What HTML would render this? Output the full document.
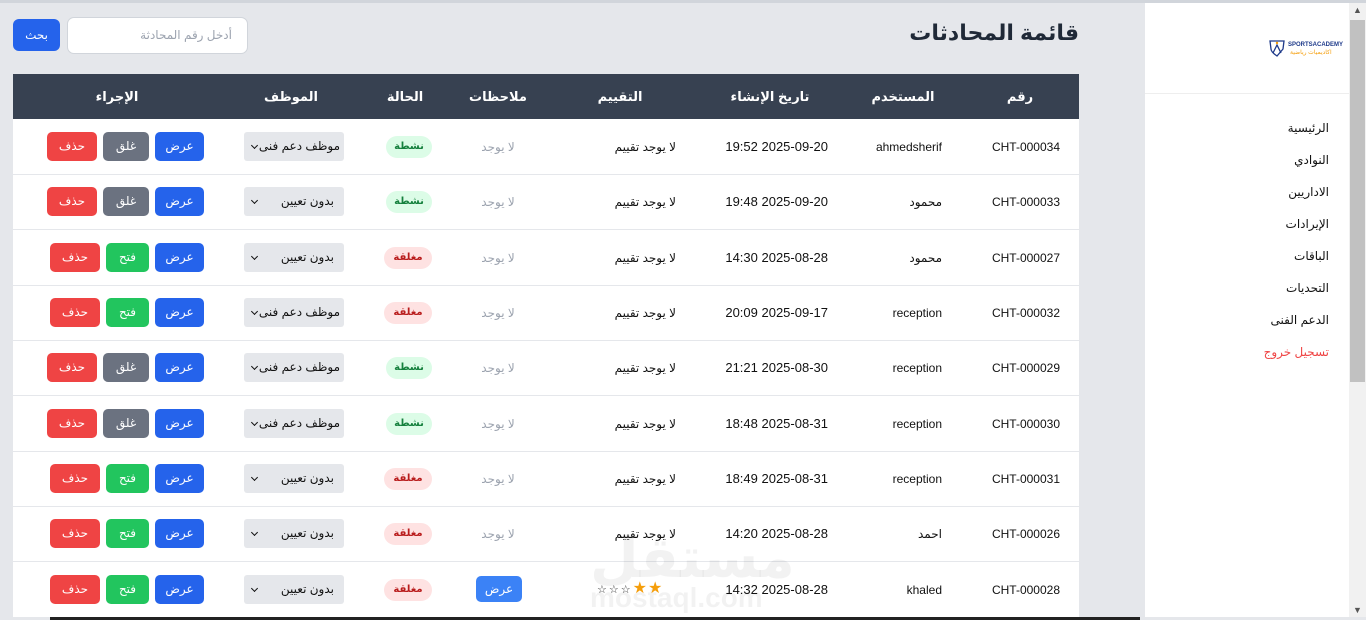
<!DOCTYPE html>
<html><head><meta charset="utf-8"><style>
*{box-sizing:border-box;margin:0;padding:0}
body{width:1366px;height:620px;overflow:hidden;background:#e5e7eb;font-family:"Liberation Sans","DejaVu Sans",sans-serif;position:relative;color:#111}
.a{position:absolute}
.topline{left:0;top:0;width:1366px;height:3px;background:#d1d5db}
.side{left:1145px;top:3px;width:204px;height:614px;background:#fff}
.scroll{left:1349px;top:3px;width:17px;height:614px;background:#f1f1f1}
.thumb{left:1350px;top:20px;width:15px;height:362px;background:#c1c1c1}
.nav{right:37px;font-size:12px;text-align:right;white-space:nowrap}
h1{position:absolute;right:287px;top:20px;font-size:22px;font-weight:bold;color:#1f2937}
.btn{position:absolute;color:#fff;font-size:12px;border-radius:5px;text-align:center;line-height:29px;height:29px}
.thead{left:13px;top:74px;width:1066px;height:45px;background:#374151}
.th{position:absolute;top:74px;line-height:45px;color:#fff;font-weight:bold;font-size:13px;transform:translateX(-50%);white-space:nowrap}
.tbody{left:13px;top:119px;width:1066px;height:498px;background:#fff}
.hr{position:absolute;left:13px;width:1066px;height:1px;background:#e5e7eb}
.c{position:absolute;font-size:12px;line-height:20px;white-space:nowrap}
.num{left:940px;width:120px;text-align:right}
.usr{left:820px;width:122px;text-align:right}
.dt{left:690px;width:138px;text-align:right;direction:ltr;font-size:13px}
.rt{left:540px;width:136px;text-align:right}
.nt{left:448px;width:100px;text-align:center;color:#9ca3af}
.pill{position:absolute;left:386px;width:46px;height:22px;border-radius:11px;font-size:10px;font-weight:bold;text-align:center;line-height:22px}
.on{background:#dcfce7;color:#15803d}
.off{background:#fee2e2;color:#b91c1c;left:384px;width:48px}
.sel{position:absolute;left:244px;width:100px;height:29px;background:#e5e7eb;border-radius:3px;font-size:12px;line-height:29px;text-align:right;padding-right:4px}
.sel:after{content:"";position:absolute;left:8px;top:11px;width:4px;height:4px;border-right:1px solid #111;border-bottom:1px solid #111;transform:rotate(45deg)}
.b1{left:155px;width:49px;background:#2563eb}
.g{left:103px;width:46px;background:#6b7280}
.r1{left:47px;width:50px;background:#ef4444}
.f{left:106px;width:43px;background:#22c55e}
.r2{left:50px;width:50px;background:#ef4444}
</style></head><body>
<div class="a topline"></div>
<div class="a side"></div>
<div class="a" style="left:1145px;top:93px;width:204px;height:1px;background:#eee"></div>
<svg class="a" style="left:1268px;top:39px" width="18" height="18" viewBox="0 0 18 18"><path d="M2 2 L16 2 L15 10 Q9 17 9 17 Q3 13 3 10 Z" fill="none" stroke="#1e3a8a" stroke-width="1.3"/><path d="M5 14 L9 6 L13 14" fill="none" stroke="#1e3a8a" stroke-width="1.3"/><circle cx="9" cy="4" r="1.2" fill="#f59e0b"/></svg>
<div class="a" style="left:1288px;top:42px;font-size:6px;font-weight:bold;color:#1e3a8a">SPORTSACADEMY</div>
<div class="a" style="left:1290px;top:49px;font-size:6px;color:#f59e0b">اكاديميات رياضية</div>
<div class="a nav" style="top:121px">الرئيسية</div>
<div class="a nav" style="top:153px">النوادي</div>
<div class="a nav" style="top:185px">الاداريين</div>
<div class="a nav" style="top:217px">الإيرادات</div>
<div class="a nav" style="top:249px">الباقات</div>
<div class="a nav" style="top:281px">التحديات</div>
<div class="a nav" style="top:313px">الدعم الفنى</div>
<div class="a nav" style="top:345px;color:#ef4444">تسجيل خروج</div>
<div class="a scroll"></div><div class="a thumb"></div>
<div class="a" style="left:1353px;top:5px;font-size:9px;color:#555">▲</div>
<div class="a" style="left:1353px;top:605px;font-size:9px;color:#555">▼</div>
<div class="a" style="left:50px;top:617px;width:1090px;height:3px;background:#222"></div>

<h1>قائمة المحادثات</h1>
<div class="a" style="left:67px;top:17px;width:181px;height:37px;background:#fff;border:1px solid #d1d5db;border-radius:7px;font-size:12px;color:#9ca3af;text-align:right;padding-right:15px;line-height:35px">أدخل رقم المحادثة</div>
<div class="btn" style="left:13px;top:19px;width:47px;height:32px;line-height:32px;background:#2563eb;border-radius:6px">بحث</div>

<div class="a thead"></div>
<div class="th" style="left:1020px">رقم</div>
<div class="th" style="left:903px">المستخدم</div>
<div class="th" style="left:770px">تاريخ الإنشاء</div>
<div class="th" style="left:620px">التقييم</div>
<div class="th" style="left:498px">ملاحظات</div>
<div class="th" style="left:405px">الحالة</div>
<div class="th" style="left:291px">الموظف</div>
<div class="th" style="left:117px">الإجراء</div>
<div class="a tbody"></div>
<div class="hr" style="top:174px"></div><div class="hr" style="top:229px"></div><div class="hr" style="top:285px"></div><div class="hr" style="top:340px"></div><div class="hr" style="top:395px"></div><div class="hr" style="top:451px"></div><div class="hr" style="top:506px"></div><div class="hr" style="top:561px"></div>

<div class="c num" style="top:137px">CHT-000034</div><div class="c usr" style="top:137px">ahmedsherif</div><div class="c dt" style="top:137px">19:52 2025-09-20</div><div class="c rt" style="top:137px">لا يوجد تقييم</div><div class="c nt" style="top:137px">لا يوجد</div><div class="pill on" style="top:136px">نشطة</div><div class="sel" style="top:132px">موظف دعم فنى</div><div class="btn b1" style="top:132px">عرض</div><div class="btn g" style="top:132px">غلق</div><div class="btn r1" style="top:132px">حذف</div>

<div class="c num" style="top:192px">CHT-000033</div><div class="c usr" style="top:192px">محمود</div><div class="c dt" style="top:192px">19:48 2025-09-20</div><div class="c rt" style="top:192px">لا يوجد تقييم</div><div class="c nt" style="top:192px">لا يوجد</div><div class="pill on" style="top:191px">نشطة</div><div class="sel" style="top:187px;padding-right:10px">بدون تعيين</div><div class="btn b1" style="top:187px">عرض</div><div class="btn g" style="top:187px">غلق</div><div class="btn r1" style="top:187px">حذف</div>

<div class="c num" style="top:248px">CHT-000027</div><div class="c usr" style="top:248px">محمود</div><div class="c dt" style="top:248px">14:30 2025-08-28</div><div class="c rt" style="top:248px">لا يوجد تقييم</div><div class="c nt" style="top:248px">لا يوجد</div><div class="pill off" style="top:247px">مغلقة</div><div class="sel" style="top:243px;padding-right:10px">بدون تعيين</div><div class="btn b1" style="top:243px">عرض</div><div class="btn f" style="top:243px">فتح</div><div class="btn r2" style="top:243px">حذف</div>

<div class="c num" style="top:303px">CHT-000032</div><div class="c usr" style="top:303px">reception</div><div class="c dt" style="top:303px">20:09 2025-09-17</div><div class="c rt" style="top:303px">لا يوجد تقييم</div><div class="c nt" style="top:303px">لا يوجد</div><div class="pill off" style="top:302px">مغلقة</div><div class="sel" style="top:298px">موظف دعم فنى</div><div class="btn b1" style="top:298px">عرض</div><div class="btn f" style="top:298px">فتح</div><div class="btn r2" style="top:298px">حذف</div>

<div class="c num" style="top:358px">CHT-000029</div><div class="c usr" style="top:358px">reception</div><div class="c dt" style="top:358px">21:21 2025-08-30</div><div class="c rt" style="top:358px">لا يوجد تقييم</div><div class="c nt" style="top:358px">لا يوجد</div><div class="pill on" style="top:357px">نشطة</div><div class="sel" style="top:353px">موظف دعم فنى</div><div class="btn b1" style="top:353px">عرض</div><div class="btn g" style="top:353px">غلق</div><div class="btn r1" style="top:353px">حذف</div>

<div class="c num" style="top:414px">CHT-000030</div><div class="c usr" style="top:414px">reception</div><div class="c dt" style="top:414px">18:48 2025-08-31</div><div class="c rt" style="top:414px">لا يوجد تقييم</div><div class="c nt" style="top:414px">لا يوجد</div><div class="pill on" style="top:413px">نشطة</div><div class="sel" style="top:409px">موظف دعم فنى</div><div class="btn b1" style="top:409px">عرض</div><div class="btn g" style="top:409px">غلق</div><div class="btn r1" style="top:409px">حذف</div>

<div class="c num" style="top:469px">CHT-000031</div><div class="c usr" style="top:469px">reception</div><div class="c dt" style="top:469px">18:49 2025-08-31</div><div class="c rt" style="top:469px">لا يوجد تقييم</div><div class="c nt" style="top:469px">لا يوجد</div><div class="pill off" style="top:468px">مغلقة</div><div class="sel" style="top:464px;padding-right:10px">بدون تعيين</div><div class="btn b1" style="top:464px">عرض</div><div class="btn f" style="top:464px">فتح</div><div class="btn r2" style="top:464px">حذف</div>

<div class="c num" style="top:524px">CHT-000026</div><div class="c usr" style="top:524px">احمد</div><div class="c dt" style="top:524px">14:20 2025-08-28</div><div class="c rt" style="top:524px">لا يوجد تقييم</div><div class="c nt" style="top:524px">لا يوجد</div><div class="pill off" style="top:523px">مغلقة</div><div class="sel" style="top:519px;padding-right:10px">بدون تعيين</div><div class="btn b1" style="top:519px">عرض</div><div class="btn f" style="top:519px">فتح</div><div class="btn r2" style="top:519px">حذف</div>

<div class="a" style="left:590px;top:525px;font-size:56px;font-weight:bold;color:rgba(0,0,0,0.05)">مستقل</div>
<div class="a" style="left:590px;top:582px;font-size:28px;font-weight:bold;color:rgba(0,0,0,0.05)">mostaql.com</div>

<div class="c num" style="top:580px">CHT-000028</div><div class="c usr" style="top:580px">khaled</div><div class="c dt" style="top:580px">14:32 2025-08-28</div>
<div class="c" style="left:597px;top:579px;font-size:11px;letter-spacing:2px;color:#333">☆☆☆<span style="color:#f59e0b;font-size:16px;letter-spacing:1px">★★</span></div>
<div class="btn" style="left:476px;top:576px;width:46px;height:26px;line-height:26px;background:#3b82f6;border-radius:5px">عرض</div>
<div class="pill off" style="top:579px">مغلقة</div><div class="sel" style="top:575px;padding-right:10px">بدون تعيين</div><div class="btn b1" style="top:575px">عرض</div><div class="btn f" style="top:575px">فتح</div><div class="btn r2" style="top:575px">حذف</div>
</body></html>
